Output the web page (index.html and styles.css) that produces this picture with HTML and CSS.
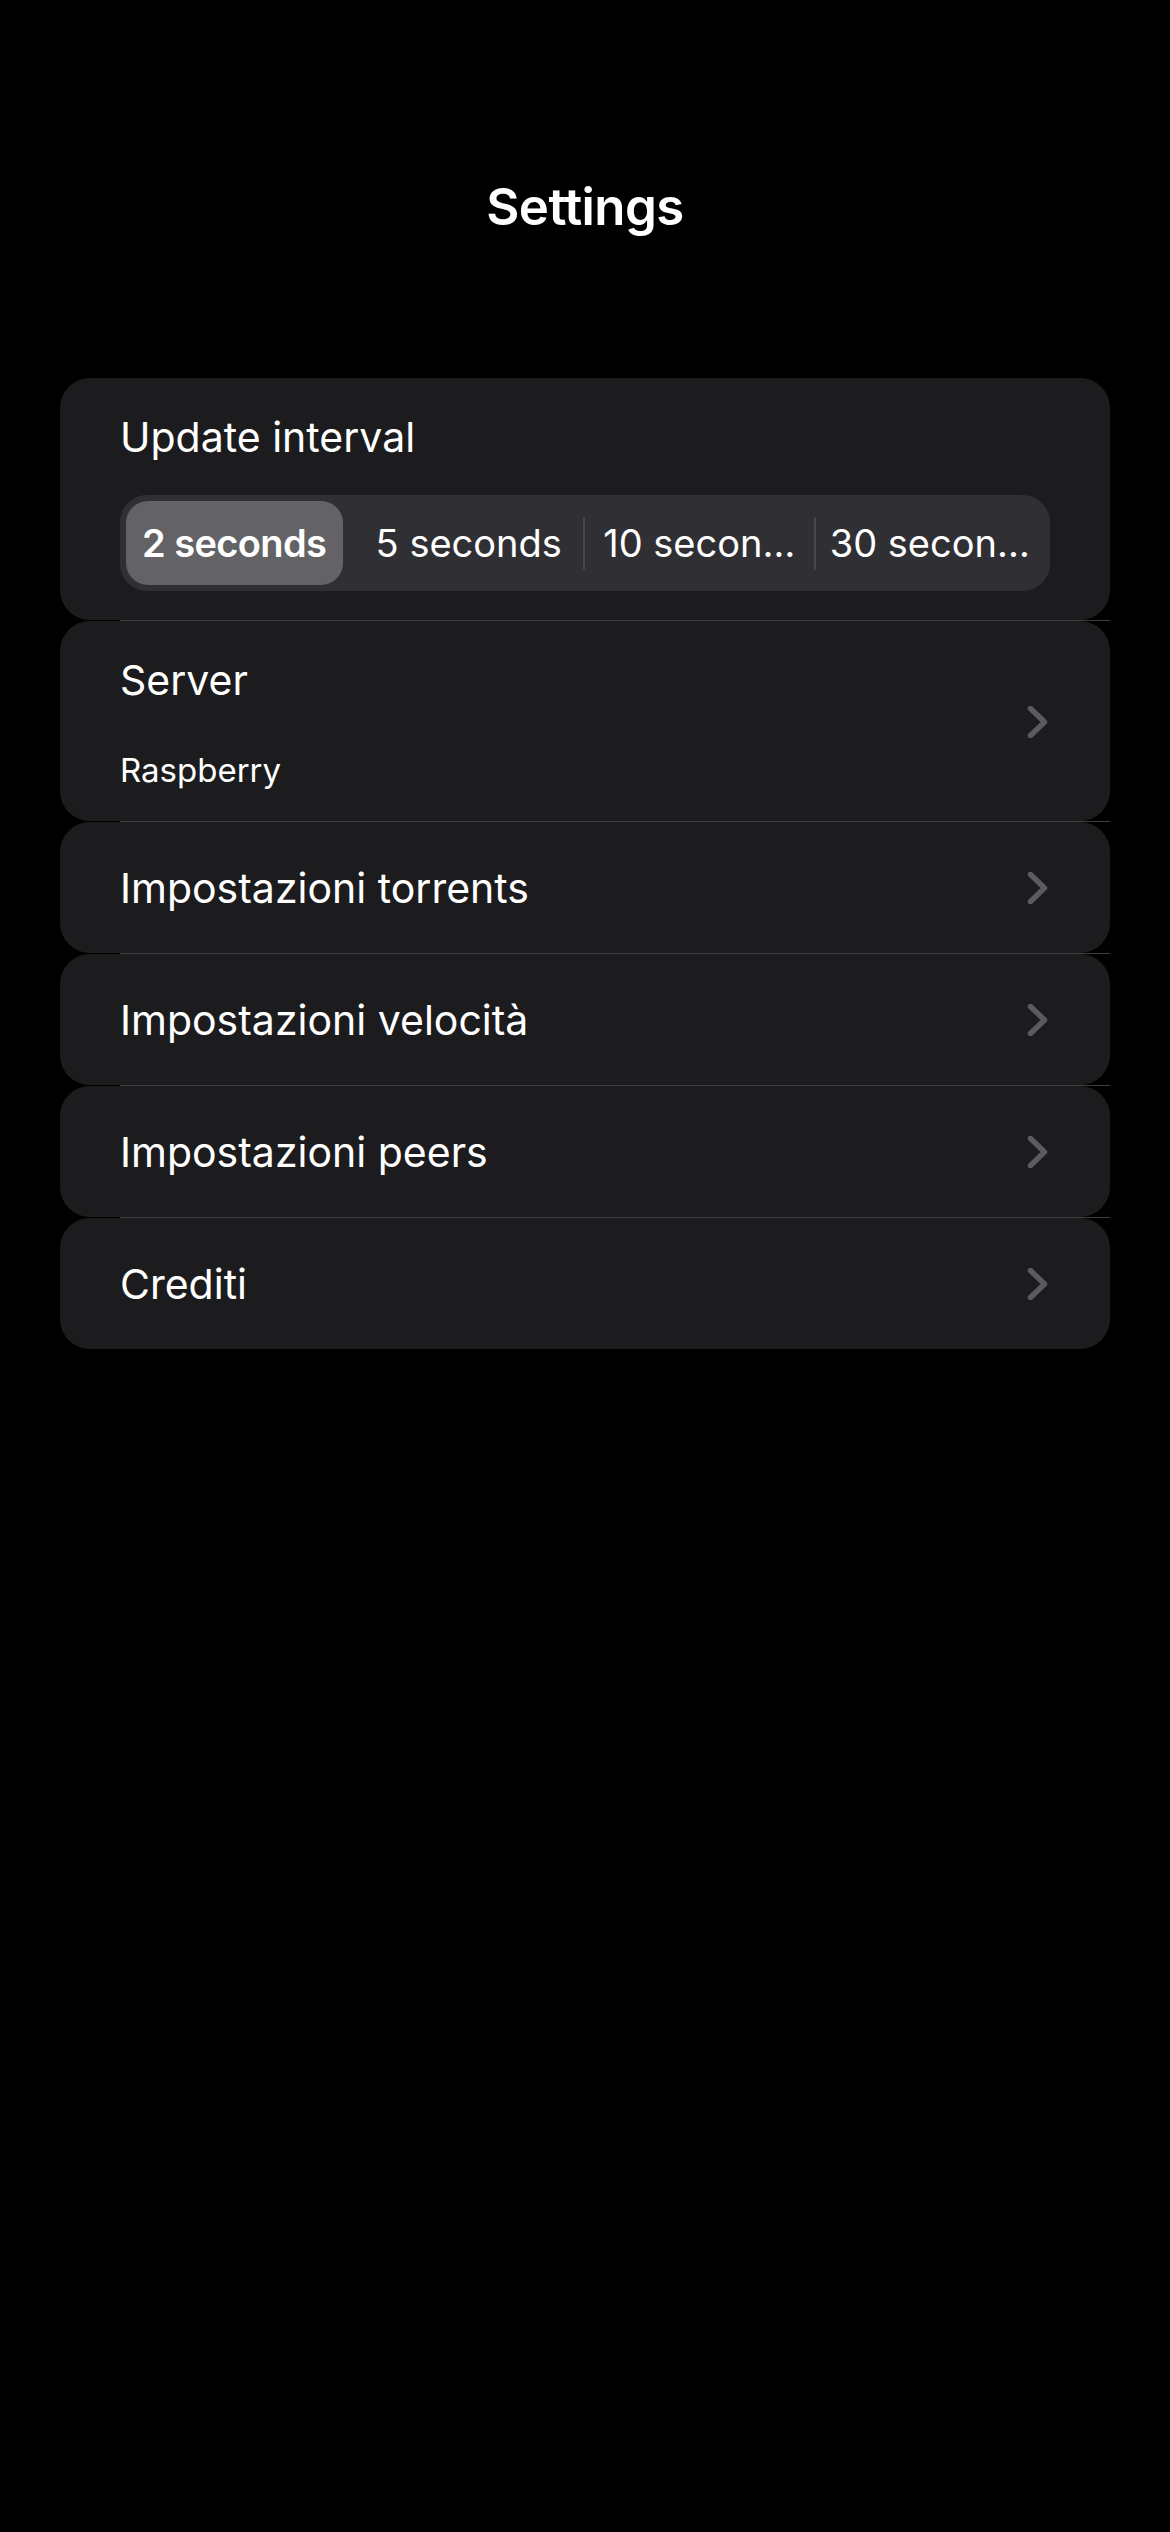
FILE: index.html
```html
<!DOCTYPE html>
<html lang="it">
<head>
<meta charset="utf-8">
<title>Settings</title>
<link rel="stylesheet" href="styles.css">
</head>
<body>
<div class="screen">
  <header class="nav">
    <h1 class="nav-title">Settings</h1>
  </header>

  <main class="list">
    <section class="card card-interval">
      <div class="row-title">Update interval</div>
      <div class="seg">
        <div class="seg-item seg-first">
          <div class="seg-thumb"><span class="seg-label">2 seconds</span></div>
        </div>
        <div class="seg-item"><span class="seg-label">5 seconds</span></div>
        <div class="seg-divider"></div>
        <div class="seg-item"><span class="seg-label">10 secon…</span></div>
        <div class="seg-divider"></div>
        <div class="seg-item"><span class="seg-label">30 secon…</span></div>
      </div>
    </section>
    <div class="sep"></div>

    <section class="card card-server">
      <div class="text-block">
        <div class="row-title">Server</div>
        <div class="row-subtitle">Raspberry</div>
      </div>
      <svg class="chev" viewBox="0 0 23 32" width="23" height="32" aria-hidden="true"><path d="M3.5 2.5 L17.5 16 L3.5 29.5"/></svg>
    </section>
    <div class="sep"></div>

    <section class="card card-simple">
      <div class="row-title">Impostazioni torrents</div>
      <svg class="chev" viewBox="0 0 23 32" width="23" height="32" aria-hidden="true"><path d="M3.5 2.5 L17.5 16 L3.5 29.5"/></svg>
    </section>
    <div class="sep"></div>

    <section class="card card-simple">
      <div class="row-title">Impostazioni velocità</div>
      <svg class="chev" viewBox="0 0 23 32" width="23" height="32" aria-hidden="true"><path d="M3.5 2.5 L17.5 16 L3.5 29.5"/></svg>
    </section>
    <div class="sep"></div>

    <section class="card card-simple">
      <div class="row-title">Impostazioni peers</div>
      <svg class="chev" viewBox="0 0 23 32" width="23" height="32" aria-hidden="true"><path d="M3.5 2.5 L17.5 16 L3.5 29.5"/></svg>
    </section>
    <div class="sep"></div>

    <section class="card card-simple">
      <div class="row-title">Crediti</div>
      <svg class="chev" viewBox="0 0 23 32" width="23" height="32" aria-hidden="true"><path d="M3.5 2.5 L17.5 16 L3.5 29.5"/></svg>
    </section>
  </main>
</div>
</body>
</html>
```

FILE: styles.css
```css
* { box-sizing: border-box; }

html, body {
  margin: 0;
  padding: 0;
  background: #000000;
}

body {
  width: 1170px;
  min-height: 2532px;
  font-family: "Inter", "Noto Sans", "Liberation Sans", sans-serif;
  color: #ffffff;
  -webkit-font-smoothing: antialiased;
}

.screen {
  width: 1170px;
  min-height: 2532px;
}

.nav {
  padding-top: 177px;
  margin-bottom: 141px;
  text-align: center;
}

.nav-title {
  margin: 0;
  font-size: 51px;
  line-height: 60px;
  font-weight: 600;
  letter-spacing: -0.6px;
}

.list {
  margin: 0 60px;
  display: flex;
  flex-direction: column;
}

.card {
  background: #1c1c1e;
  border-radius: 30px;
  padding: 0 60px;
}

.sep {
  height: 1px;
  margin-left: 60px;
  background: #3d3d40;
}

.row-title {
  font-size: 41px;
  line-height: 50px;
  font-weight: 400;
  white-space: nowrap;
}

.row-subtitle {
  margin-top: 47px;
  font-size: 33px;
  line-height: 36px;
  font-weight: 400;
}

.card-interval {
  padding-top: 34px;
  padding-bottom: 29px;
}

.seg {
  margin-top: 33px;
  height: 96px;
  padding: 6px;
  border-radius: 27px;
  background: #303034;
  display: flex;
  align-items: center;
}

.seg-item {
  flex: 1 1 0;
  min-width: 0;
  height: 84px;
  padding: 0;
  display: flex;
  align-items: center;
  justify-content: center;
}

.seg-first {
  justify-content: flex-start;
}

.seg-label {
  display: block;
  min-width: 0;
  font-size: 38px;
  line-height: 50px;
  white-space: nowrap;
  overflow: hidden;
  text-overflow: ellipsis;
}

.seg-thumb {
  width: calc(100% - 12px);
  height: 84px;
  border-radius: 22px;
  background: #636366;
  display: flex;
  align-items: center;
  justify-content: center;
}

.seg-thumb .seg-label {
  font-weight: 600;
  letter-spacing: -0.6px;
}

.seg-divider {
  flex: 0 0 2px;
  width: 2px;
  height: 53px;
  border-radius: 1px;
  background: #48484c;
}

.card-server {
  display: flex;
  align-items: center;
  padding-top: 34px;
  padding-bottom: 33px;
}

.text-block {
  flex: 1 1 auto;
  min-width: 0;
}

.card-simple {
  height: 131px;
  display: flex;
  align-items: center;
}

.card-simple .row-title {
  flex: 1 1 auto;
}

.chev {
  flex: 0 0 23px;
  display: block;
}

.chev path {
  fill: none;
  stroke: #5a5a5f;
  stroke-width: 5.5;
  stroke-linecap: round;
  stroke-linejoin: round;
}
```
